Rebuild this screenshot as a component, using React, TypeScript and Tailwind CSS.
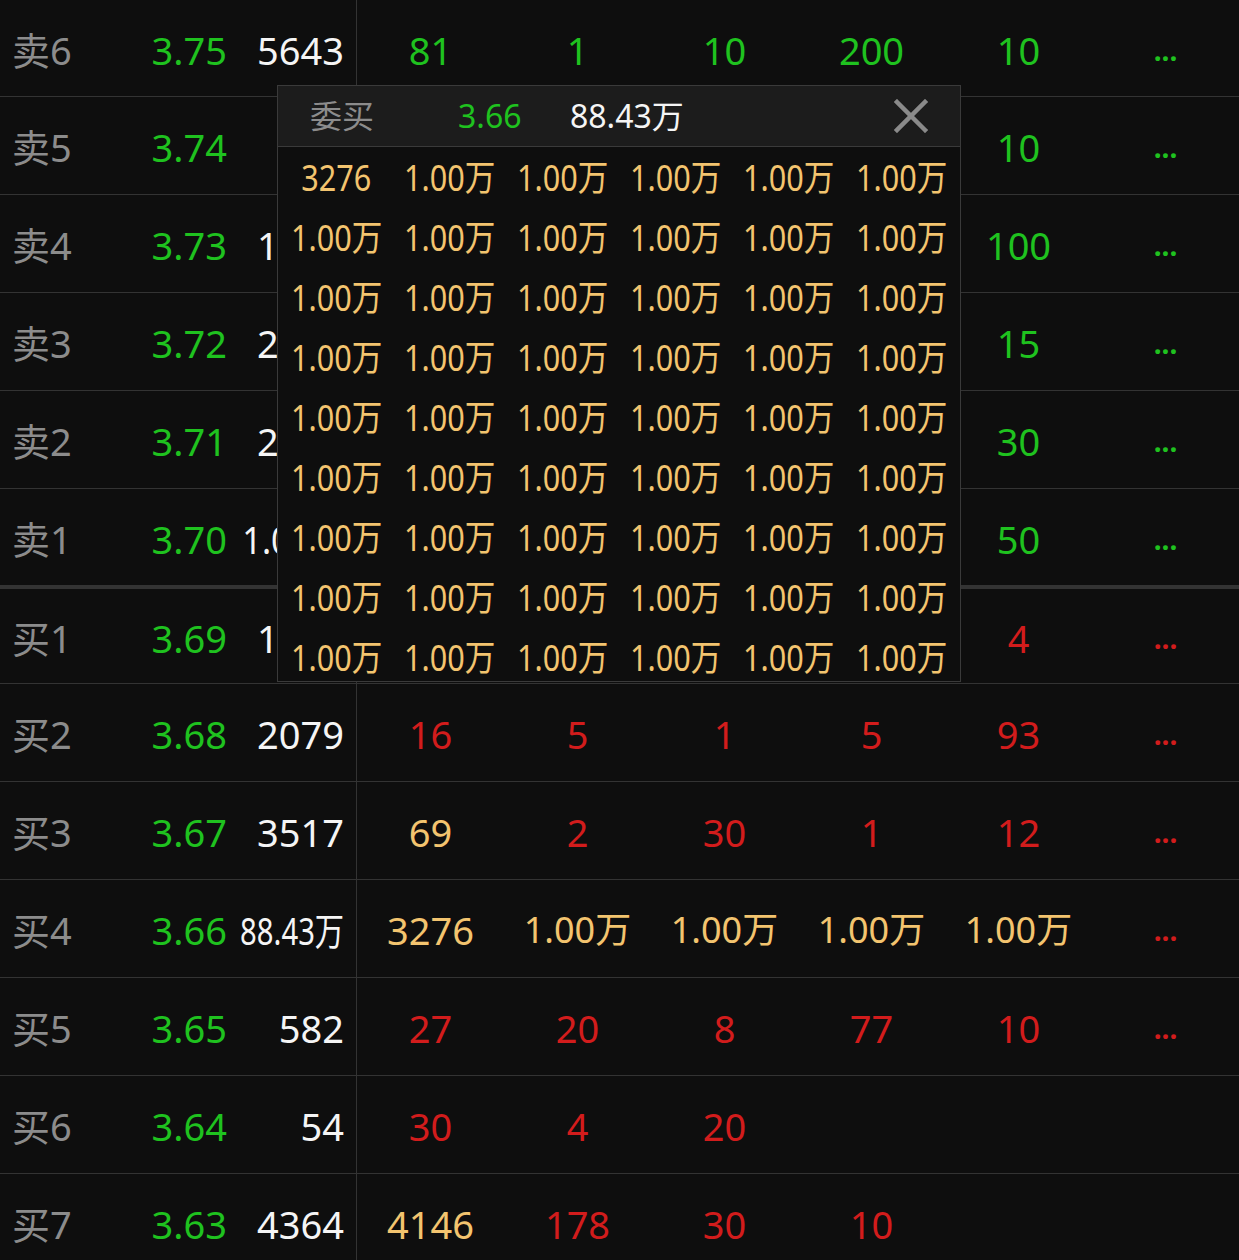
import React from "react";

type Tone = "green" | "red" | "gold";

const TONE: Record<Tone, string> = {
  green: "text-[#1fc21f]",
  red: "text-[#d21c1c]",
  gold: "text-[#f3c46f]",
};

type Cell = { v: string; tone: Tone; wide?: boolean } | null;

type Row = {
  label: string;
  price: string;
  vol: string;
  volSquash?: string;
  cells: Cell[];
  dots?: Tone;
  box: string;
};

const g = (v: string): Cell => ({ v, tone: "green" });
const r = (v: string): Cell => ({ v, tone: "red" });
const y = (v: string, wide = false): Cell => ({ v, tone: "gold", wide });

// cells under the popup are left empty
const ROWS: Row[] = [
  { label: "卖6", price: "3.75", vol: "5643", cells: [g("81"), g("1"), g("10"), g("200"), g("10")], dots: "green", box: "h-[97px] border-b" },
  { label: "卖5", price: "3.74", vol: "", cells: [null, null, null, null, g("10")], dots: "green", box: "h-[98px] border-b" },
  { label: "卖4", price: "3.73", vol: "1250", cells: [null, null, null, null, g("100")], dots: "green", box: "h-[98px] border-b" },
  { label: "卖3", price: "3.72", vol: "2316", cells: [null, null, null, null, g("15")], dots: "green", box: "h-[98px] border-b" },
  { label: "卖2", price: "3.71", vol: "2095", cells: [null, null, null, null, g("30")], dots: "green", box: "h-[98px] border-b" },
  { label: "卖1", price: "3.70", vol: "1.00万", volSquash: "scale-x-[0.9]", cells: [null, null, null, null, g("50")], dots: "green", box: "h-[100px] border-b-4" },
  { label: "买1", price: "3.69", vol: "1532", cells: [null, null, null, null, r("4")], dots: "red", box: "h-[95px] border-b" },
  { label: "买2", price: "3.68", vol: "2079", cells: [r("16"), r("5"), r("1"), r("5"), r("93")], dots: "red", box: "h-[98px] border-b" },
  { label: "买3", price: "3.67", vol: "3517", cells: [y("69"), r("2"), r("30"), r("1"), r("12")], dots: "red", box: "h-[98px] border-b" },
  { label: "买4", price: "3.66", vol: "88.43万", volSquash: "scale-x-[0.77]", cells: [y("3276"), y("1.00万", true), y("1.00万", true), y("1.00万", true), y("1.00万", true)], dots: "red", box: "h-[98px] border-b" },
  { label: "买5", price: "3.65", vol: "582", cells: [r("27"), r("20"), r("8"), r("77"), r("10")], dots: "red", box: "h-[98px] border-b" },
  { label: "买6", price: "3.64", vol: "54", cells: [r("30"), r("4"), r("20")], box: "h-[98px] border-b" },
  { label: "买7", price: "3.63", vol: "4364", cells: [y("4146"), r("178"), r("30"), r("10")], box: "h-[98px] border-b" },
];

const POPUP_CELLS: string[] = ["3276", ...Array.from({ length: 53 }, () => "1.00万")];

function CloseIcon() {
  return (
    <svg width="34" height="34" viewBox="0 0 34 34" fill="none">
      <path d="M3 3 L31 31 M31 3 L3 31" stroke="#8a8a8a" strokeWidth="4.5" strokeLinecap="square" />
    </svg>
  );
}

function OrderRow({ row }: { row: Row }) {
  return (
    <div className={`flex shrink-0 border-[#333] ${row.box}`}>
      <div className="flex w-[357px] shrink-0 items-center whitespace-nowrap border-r border-[#333] px-[12px] pt-[3px]">
        <span className="w-[130px] shrink-0 text-[#8c8c8c]">{row.label}</span>
        <span className="w-[85px] shrink-0 text-right text-[#1fc21f]">{row.price}</span>
        <span className="flex min-w-0 flex-1 justify-end text-[#f5f5f5]">
          {row.volSquash ? (
            <span className={`inline-block shrink-0 origin-right ${row.volSquash}`}>{row.vol}</span>
          ) : (
            <span>{row.vol}</span>
          )}
        </span>
      </div>
      <div className="grid flex-1 grid-cols-6 whitespace-nowrap pt-[3px]">
        {[0, 1, 2, 3, 4].map((i) => {
          const c = row.cells[i];
          return (
            <div key={i} className="flex items-center justify-center">
              {c && (
                <span className={`${TONE[c.tone]} ${c.wide ? "text-[36px]" : ""}`}>{c.v}</span>
              )}
            </div>
          );
        })}
        <div className="flex items-center justify-center">
          {row.dots && (
            <span className={`text-[28px] font-bold leading-none ${TONE[row.dots]}`}>...</span>
          )}
        </div>
      </div>
    </div>
  );
}

export default function App() {
  return (
    <div className="relative h-[1260px] w-[1239px] overflow-hidden bg-[#0e0e0e] font-['Noto_Sans','Noto_Sans_CJK_SC',sans-serif] text-[38px] leading-none">
      <div className="flex flex-col">
        {ROWS.map((row) => (
          <OrderRow key={row.label} row={row} />
        ))}
      </div>

      {/* queue popup for 买4 */}
      <div className="absolute left-[277px] top-[85px] h-[597px] w-[684px] overflow-hidden border border-[#3a3a3a] bg-[#0e0e0e]">
        <div className="flex h-[61px] items-center whitespace-nowrap border-b border-[#3a3a3a] bg-[#1c1c1c] pl-[32px] pr-[32px] text-[32px]">
          <span className="w-[148px] text-[#8c8c8c]">委买</span>
          <span className="w-[112px] text-[#1fc21f]">3.66</span>
          <span className="text-[#f5f5f5]">88.43万</span>
          <span className="ml-auto flex">
            <CloseIcon />
          </span>
        </div>
        <div className="grid grid-cols-6 auto-rows-[60px] whitespace-nowrap px-[2px] pt-[1px] text-[36px] text-[#f3c46f]">
          {POPUP_CELLS.map((v, i) => (
            <div key={i} className="flex items-center justify-center">
              <span className="inline-block scale-x-[0.85]">{v}</span>
            </div>
          ))}
        </div>
      </div>
    </div>
  );
}
